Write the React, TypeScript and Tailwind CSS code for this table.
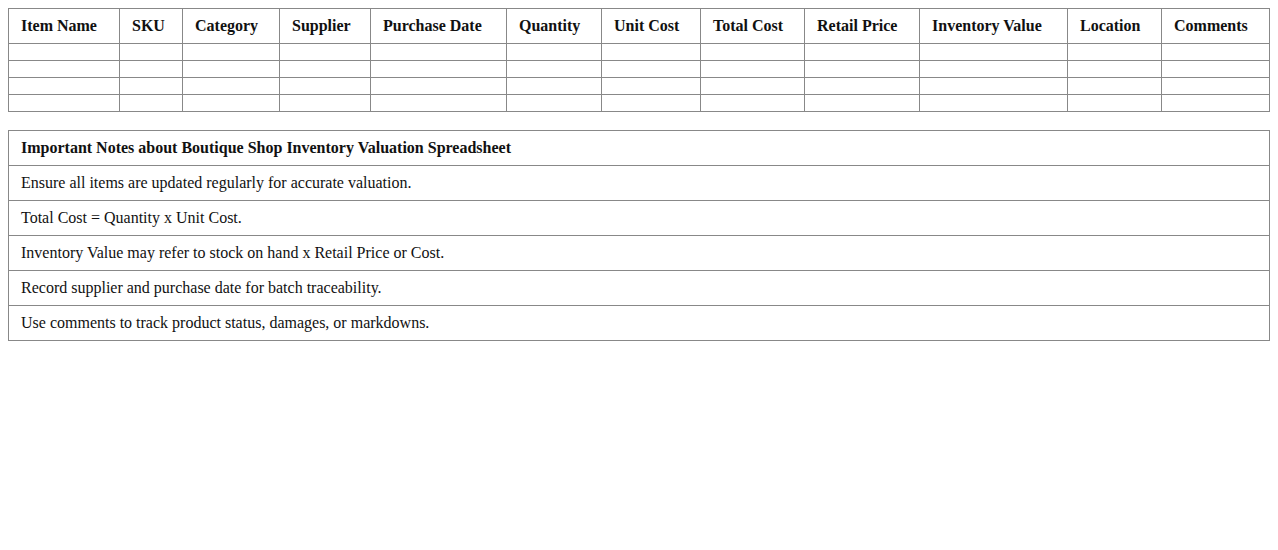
import React from "react";

const cols: { name: string; w: string }[] = [
  { name: "Item Name", w: "w-[111px]" },
  { name: "SKU", w: "w-[63px]" },
  { name: "Category", w: "w-[97px]" },
  { name: "Supplier", w: "w-[91px]" },
  { name: "Purchase Date", w: "w-[136px]" },
  { name: "Quantity", w: "w-[95px]" },
  { name: "Unit Cost", w: "w-[99px]" },
  { name: "Total Cost", w: "w-[104px]" },
  { name: "Retail Price", w: "w-[115px]" },
  { name: "Inventory Value", w: "w-[148px]" },
  { name: "Location", w: "w-[94px]" },
  { name: "Comments", w: "w-[108px]" },
];

const notes = [
  "Ensure all items are updated regularly for accurate valuation.",
  "Total Cost = Quantity x Unit Cost.",
  "Inventory Value may refer to stock on hand x Retail Price or Cost.",
  "Record supplier and purchase date for batch traceability.",
  "Use comments to track product status, damages, or markdowns.",
];

export default function App() {
  return (
    <div className="bg-white p-2 text-[#111] font-['Liberation_Serif','Times_New_Roman',serif] min-h-[550px]">
      <table className="w-full table-fixed border-collapse border border-[#888]">
        <thead>
          <tr>
            {cols.map((c) => (
              <th
                key={c.name}
                className={`${c.w} border border-[#888] px-3 py-2 text-left text-base font-bold leading-[18px]`}
              >
                {c.name}
              </th>
            ))}
          </tr>
        </thead>
        <tbody>
          {[0, 1, 2, 3].map((r) => (
            <tr key={r} className="h-[17px]">
              {cols.map((c) => (
                <td key={c.name} className="border border-[#888] px-3 py-0 h-[17px]"></td>
              ))}
            </tr>
          ))}
        </tbody>
      </table>

      <table className="mt-[18px] w-full border-collapse border border-[#888] text-base">
        <thead>
          <tr>
            <th className="border border-[#888] px-3 py-2 text-left font-bold leading-[18px] h-[35px]">
              Important Notes about Boutique Shop Inventory Valuation Spreadsheet
            </th>
          </tr>
        </thead>
        <tbody>
          {notes.map((n) => (
            <tr key={n}>
              <td className="border border-[#888] px-3 py-2 leading-[18px] h-[35px]">{n}</td>
            </tr>
          ))}
        </tbody>
      </table>
    </div>
  );
}
